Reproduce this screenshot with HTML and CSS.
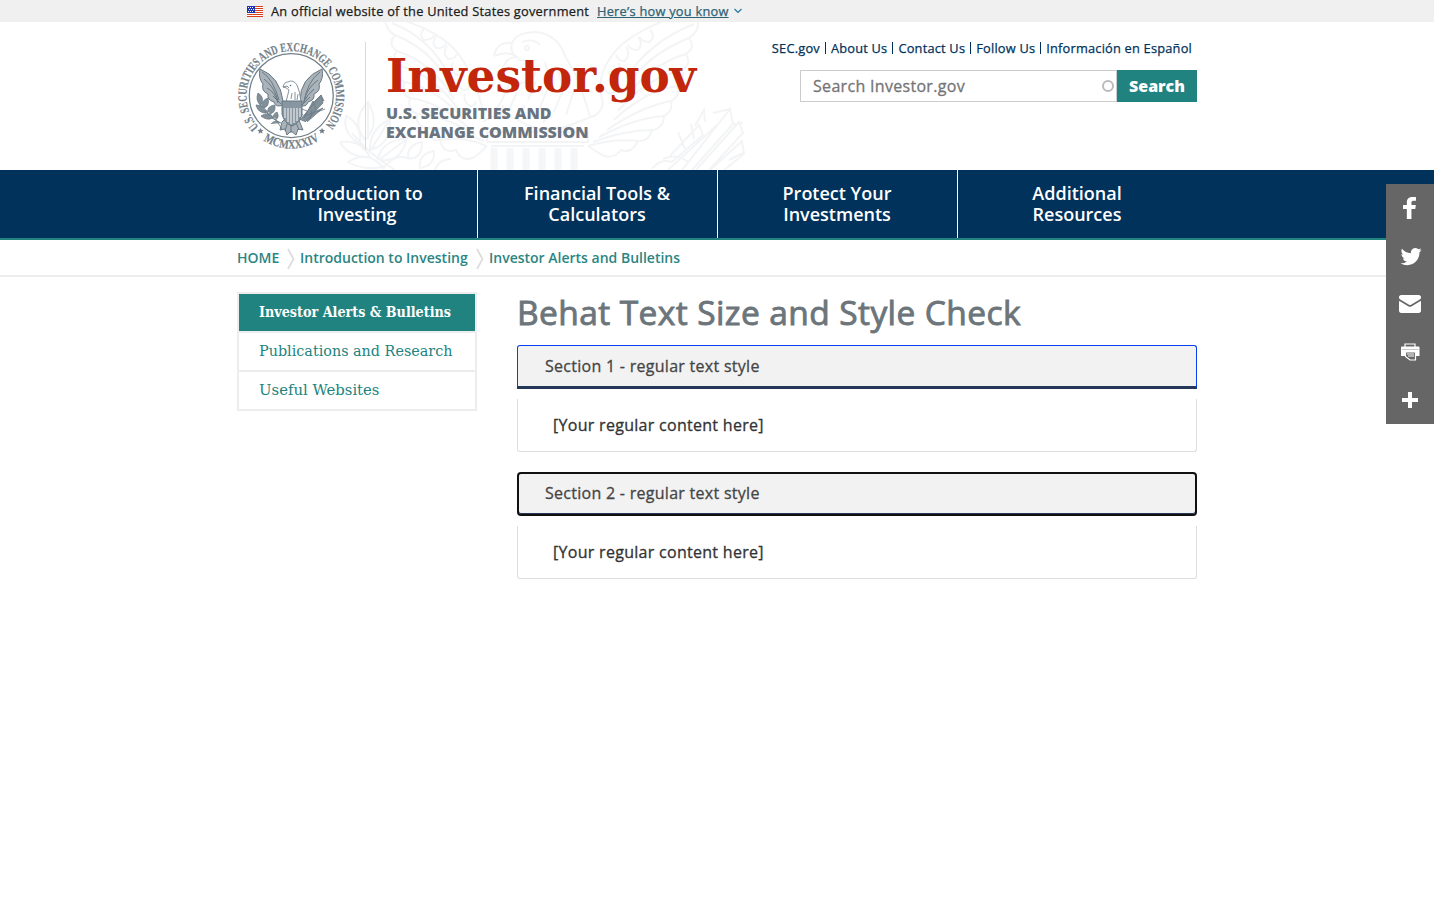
FILE: index.html
```html
<!DOCTYPE html>
<html lang="en">
<head>
<meta charset="utf-8">
<title>Behat Text Size and Style Check | Investor.gov</title>
<link rel="stylesheet" href="styles.css">
</head>
<body>
<div class="banner">
  <div class="banner-inner">
    <svg class="flag" width="16" height="11" viewBox="0 0 16 11"><path fill="#fff" d="M0 0h16v11H0z"/><path stroke="#db3e1f" d="M0 .5h16M0 2.5h16M0 4.5h16M0 6.5h16M0 8.5h16M0 10.5h16"/><path fill="#1e33b1" d="M0 0h8v7H0z"/><path stroke="#fff" stroke-dasharray="1 1" d="M1 1.5h6M2 3.5h5M1 5.5h6"/></svg>
    <span class="banner-text">An official website of the United States government</span>
    <a class="banner-link" href="#">Here’s how you know</a>
    <svg class="chev" width="8" height="6" viewBox="0 0 8 6"><path d="M.5 1 4 4.5 7.500 1" fill="none" stroke="#2378a0" stroke-width="1.2"/></svg>
  </div>
</div>

<header class="header">
  <svg class="watermark" width="420" height="150" viewBox="0 0 420 150" fill="none" stroke="#f3f4f6" stroke-width="2">
    <g>
      <path d="M62 0Q108 14 124 42 136 62 144 94M45 0Q47 12 55 15 47 24 57 31 50 40 60 46 54 58 65 62 60 74 70 78 67 90 77 94 75 106 87 108 87 121 100 120 103 134 116 130 122 143 135 137L147 126"/>
      <path d="M52 3Q90 18 108 54M55 15Q93 30 112 68M57 31Q92 42 114 79M60 46Q94 55 119 90M65 62Q95 68 123 98M70 78Q98 82 128 107M77 94Q106 96 135 115M87 108Q114 108 144 121M100 120Q122 116 147 126"/>
      <path d="M84 9q-6 5 0 11 8 0 10-5M96 16q-5 7 0 12 8 1 10-5M107 26q-5 7 1 13 7 0 9-5M113 42q-3 8 3 13 7 0 8-5M119 58q-3 8 4 12 6 0 7-5M125 74q-2 8 5 12 5 0 6-5"/>
      <path d="M326 0Q282 17 269 40 256 58 263 84 260 96 248 98M357 0Q361 10 349 18 356 27 346 34 352 44 342 50 346 60 337 66 340 77 331 81 333 92 324 96 323 109 312 110 309 122 298 121 292 134 281 130 273 140 262 135L248 126"/>
      <path d="M354 4Q309 22 286 58M349 18Q306 35 284 70M346 34Q309 45 283 81M342 50Q306 58 278 91M337 66Q303 72 274 100M331 81Q300 87 267 110M324 96Q295 98 259 117M312 110Q285 110 253 122M298 121Q275 118 248 126"/>
      <path d="M310 10q6 5 0 12-8 0-10-5M298 17q6 6 0 13-8 0-10-5M286 27q5 7-1 14-7 0-9-6M279 43q3 8-3 14-7 0-8-6M276 61q2 8-4 13-6 0-7-6"/>
      <path d="M154 36Q157 21 172 23 177 12 196 12 218 14 226 38 238 54 250 97M154 36Q168 30 177 37 167 37 164 46M172 23q-3 9 6 15M178 40Q196 40 195 55 188 65 169 64 162 83 155 90M182 22q12-4 18 3"/>
      <circle cx="187" cy="28" r="2"/>
      <path d="M205 42q5 13 2 25M216 47q7 13 6 28M196 61l-8 19M207 70l-8 20M222 72l-8 20M177 72l-8 18M234 70l-8 25M185 85l-8 15M210 91l-7 12M163 85l-4 15"/>
      <path d="M143 102Q160 89 180 101 204 116 233 104L248 98M147 112h101v10H147zM151 126h93"/>
    </g>
    <path d="M154 128v22M170 128v22M186 128v22M202 128v22M218 128v22M234 128v22" stroke="#f5f6f8" stroke-width="7"/>
    <g>
      <path d="M55 150Q30 135 12 113M28 82Q10 101 25 120 41 104 28 82zM6 96q-4 17 14 28 2-20-14-28zM50 99q-21 11-20 31 22-6 20-31zM0 122q9 16 30 15-10-18-30-15zM67 119q-24 0-29 20 22 6 29-20zM8 142q16 9 35 5-15-17-35-5zM70 139q-15-7-27 10M28 82v37M50 99l-18 29M67 119l-27 20"/>
      <path d="M82 122q-15 3-14 16 14 2 14-16zM94 131q-16 3-14 17 15-2 14-17zM111 139q-12 0-16 11"/>
      <path d="M342 150l48-61 3 15-41 46M356 150l43-48 4 11-34 37M370 150l32-29 2 13-20 16M328 150l49-45M330 136l29-31 4 10-31 27M365 102l-1-12-9 16M373 93l17-4M393 104l10-1M345 129l-7-17M354 119l-3-15M389 140l16-8M323 139q14-6 25 3M312 149q8-11 20-7"/>
    </g>
  </svg>
  <div class="header-inner">
    <svg class="seal" width="108" height="110" viewBox="0 0 108 110">
      <defs>
        <path id="ring" d="M22.500 86.500A44.800 44.800 0 1 1 86.100 86.500"/>
        <path id="ring-low" d="M17 92A52.700 52.700 0 0 0 91.600 92"/>
      </defs>
      <circle cx="54.300" cy="54.700" r="42" fill="none" stroke="#738089" stroke-width="1.300"/>
      <text class="seal-text"><textPath href="#ring" startOffset="1" textLength="206" lengthAdjust="spacingAndGlyphs">U.S. SECURITIES AND EXCHANGE COMMISSION</textPath></text>
      <text class="seal-text"><textPath href="#ring-low" startOffset="12" textLength="59" lengthAdjust="spacingAndGlyphs">MCMXXXIV</textPath></text>
      <path d="M23.500 87l.9 1.800 2.100.2-1.500 1.500.5 2.100-2-1-1.800 1.100.3-2.100-1.700-1.400 2.200-.4zM85 87l1 1.800 2.200.4-1.700 1.400.3 2.100-1.800-1.100-2 1 .5-2.100-1.500-1.500 2.100-.2z" fill="#738089"/>
      <g fill="#aab3b9" stroke="#687985" stroke-width="1">
        <path d="M46 60Q43 36 23 28q-2 9 3 15-2 7 5 10-1 6 6 8 2 6 9 3z"/>
        <path d="M63 60Q63 37 85 28q2 9-3 15 2 7-5 10 1 6-6 8-2 6-8 3z"/>
        <path d="M25 31q11 7 17 28M27 38q10 7 14 22M30 47q8 4 11 15M36 55l8 8M83 31Q70 41 67 61M81 39Q70 47 67 60M77 48Q70 54 66 62M73 56l-8 8" fill="none"/>
        <path d="M45 81l-2 8 5-1 2 6 4-4 5 4 2-6 5 1-5-12-7-5z"/>
        <path d="M51 80l-3 10M54 80v12M58 79l4 10" fill="none"/>
      </g>
      <g fill="#82909a" stroke="#687985" stroke-width=".8">
        <path d="M43 82Q30 75 21 61M21 52q-3 8 3 12 4-8-3-12zM31 57q-8 3-5 10 7-1 5-10zM19 64q2 8 10 8-2-8-10-8zM38 64q-9 1-7 9 8 0 7-9zM24 75q6 5 12 2-5-7-12-2zM40 71q-6 3-2 8 5-2 2-8zM34 83q4-5 10-1M41 82l4 6"/>
        <path d="M63 79l21-25 2 8-18 19M68 75l18-8-16 14M67 77l9-17 3 9M76 62l8-8 3 6M61 80l5-7M70 70l-5-2M80 71l8-3M73 78l2-9"/>
      </g>
      <path d="M46 46q1-5 5-5 5-3 9 3 3 6 4 17H49l3-12q-3-3-6-3z" fill="#fff" stroke="#687985" stroke-width=".8"/>
      <path d="M46 46l4-1 2 2M55 52l-1 6M58 51v8M61 53l-1 6" stroke="#687985" stroke-width=".8" fill="none"/><circle cx="53.500" cy="44.500" r=".8" fill="#566873"/>
      <path d="M45 60h20v13q-2 9-10 12-8-3-10-12z" fill="#8796a1" stroke="#657785"/>
      <path d="M48 67v10M51 67v14M54 67v16M57 67v15M60 67v13M63 67v9" stroke="#eef1f3" stroke-width="1.1"/>
    </svg>
    <div class="brand">
      <svg class="wordmark" width="320" height="62" viewBox="0 0 320 62"><text x="0" y="47" textLength="310" lengthAdjust="spacingAndGlyphs">Investor.gov</text></svg>
      <div class="agency">U.S. SECURITIES AND<br>EXCHANGE COMMISSION</div>
    </div>
    <div class="tools">
      <nav class="util"><a>SEC.gov</a><a>About Us</a><a>Contact Us</a><a>Follow Us</a><a>Información en Español</a></nav>
      <form class="search"><div class="field"><span>Search Investor.gov</span><i class="ring"></i></div><div class="button">Search</div></form>
    </div>
  </div>
</header>

<nav class="mainnav"><div class="mainnav-inner">
  <a>Introduction to<br>Investing</a><a>Financial Tools &amp;<br>Calculators</a><a>Protect Your<br>Investments</a><a>Additional<br>Resources</a>
</div></nav>

<div class="crumbs"><div class="crumbs-inner">
  <a class="c1">HOME</a>
  <svg width="8" height="22" viewBox="0 0 8 22"><path d="M1 1l5.500 10L1 21" fill="none" stroke="#ddd" stroke-width="1.800"/></svg>
  <a class="c2">Introduction to Investing</a>
  <svg width="8" height="22" viewBox="0 0 8 22"><path d="M1 1l5.500 10L1 21" fill="none" stroke="#ddd" stroke-width="1.800"/></svg>
  <a class="c3">Investor Alerts and Bulletins</a>
</div></div>

<div class="page">
  <aside class="side">
    <a class="side-item active"><svg width="200" height="24"><text x="0" y="16" textLength="192" lengthAdjust="spacingAndGlyphs">Investor Alerts &amp; Bulletins</text></svg></a>
    <a class="side-item"><svg width="200" height="24"><text x="0" y="16" textLength="193.500" lengthAdjust="spacingAndGlyphs">Publications and Research</text></svg></a>
    <a class="side-item"><svg width="200" height="24"><text x="0" y="16" textLength="120.500" lengthAdjust="spacingAndGlyphs">Useful Websites</text></svg></a>
  </aside>
  <main class="main">
    <h1>Behat Text Size and Style Check</h1>
    <div class="acc-head hover">Section 1 - regular text style</div>
    <div class="acc-body">[Your regular content here]</div>
    <div class="acc-head focus">Section 2 - regular text style</div>
    <div class="acc-body">[Your regular content here]</div>
  </main>
</div>

<div class="share">
  <a><svg viewBox="0 0 32 32"><path fill="#fff" d="M22 5.160c-.406-.054-1.806-.16-3.430-.16-3.400 0-5.733 1.825-5.733 5.170v2.882H9v3.913h3.837V27h4.604V16.965h3.823l.587-3.913h-4.410v-2.500c0-1.123.347-1.903 2.198-1.903H22V5.160z"/></svg></a>
  <a><svg viewBox="0 0 32 32"><path fill="#fff" transform="translate(3 2.500) scale(.88)" d="M28 8.557a9.913 9.913 0 0 1-2.828.775 4.930 4.930 0 0 0 2.166-2.725 9.738 9.738 0 0 1-3.130 1.194 4.920 4.920 0 0 0-3.593-1.550 4.924 4.924 0 0 0-4.794 6.049c-4.090-.210-7.720-2.170-10.150-5.150a4.942 4.942 0 0 0-.665 2.477c0 1.710.870 3.214 2.190 4.100a4.968 4.968 0 0 1-2.230-.616v.060c0 2.390 1.700 4.380 3.952 4.830-.414.115-.850.174-1.297.174-.318 0-.626-.030-.928-.086a4.935 4.935 0 0 0 4.600 3.420 9.893 9.893 0 0 1-6.114 2.107c-.398 0-.790-.023-1.175-.068a13.953 13.953 0 0 0 7.550 2.213c9.056 0 14.010-7.507 14.010-14.013 0-.213-.005-.426-.015-.637.960-.695 1.795-1.560 2.455-2.550z"/></svg></a>
  <a><svg viewBox="0 0 32 32"><g fill="#fff"><path d="M27 22.757c0 1.240-.988 2.243-2.190 2.243H7.190C5.980 25 5 23.994 5 22.757V13.670c0-.556.390-.773.855-.496l8.780 5.238c.782.467 1.950.467 2.730 0l8.780-5.238c.472-.280.855-.063.855.495v9.087z"/><path d="M27 9.243C27 8.006 26.020 7 24.810 7H7.190C5.988 7 5 8.004 5 9.243v.465c0 .554.385 1.232.857 1.514l9.610 5.733c.267.160.800.160 1.067 0l9.610-5.733c.473-.283.856-.960.856-1.514v-.465z"/></g></svg></a>
  <a><svg viewBox="0 0 32 32"><path d="M11 11V8h10v3" fill="none" stroke="#fff" stroke-width="1.200"/><path d="M7 11.500q0-1 1-1h16.500q1 0 1 1V20H22v-4H11v4H7z" fill="#fff"/><path d="M11.500 16v4.500l4.500 3.500h5.500v-8z" fill="none" stroke="#fff" stroke-width="1.200"/><path d="M8 13.500h16.500" stroke="#bbb" stroke-width=".8"/><path d="M13 18h7M14 20h6" stroke="#fff"/></svg></a>
  <a><svg viewBox="0 0 32 32"><path fill="#fff" d="M14 8h4v6h6v4h-6v6h-4v-6H8v-4h6z"/></svg></a>
</div>
</body>
</html>
```
FILE: styles.css
```css
* { box-sizing: border-box; }
body { margin: 0; background: #fff; font-family: "Open Sans", sans-serif; color: #212529; }
.banner { height: 22px; background: #f0f0f0; }
.banner-inner { width: 960px; height: 22px; margin: 0 auto; padding-left: 10px; display: flex; align-items: center; font-size: 12.8px; line-height: 22px; white-space: nowrap; letter-spacing: .25px; -webkit-text-stroke: .25px; }
.flag { margin-right: 8px; }
.banner-text { width: 318px; color: #1b1b1b; }
.banner-link { margin-left: 8px; width: 132px; color: #2e6276; text-decoration: underline; }
.chev { margin-left: 5px; }

.header { position: relative; height: 148px; overflow: hidden; }
.watermark { position: absolute; left: calc(50% - 377px); top: -2px; }
.header-inner { position: relative; width: 960px; margin: 0 auto; display: flex; align-items: flex-start; }
.seal { margin-top: 19px; display: block; }
.seal-text { font-family: "Liberation Serif", serif; font-weight: 700; font-size: 12.5px; fill: #738089; stroke: #738089; stroke-width: .2px; }
.brand { margin: 20px 0 0 20px; height: 108px; border-left: 1px solid #d8dadd; padding-left: 20px; width: 345px; }
.wordmark { display: block; margin-top: 3px; }
.wordmark text { font-family: "DejaVu Serif", serif; font-weight: 700; font-size: 46px; fill: #c2260b; }
.agency { margin-top: -3px; font-size: 16px; line-height: 19px; font-weight: 800; color: #6a747e; white-space: nowrap; }
.tools { margin-left: auto; width: 460px; display: flex; flex-direction: column; align-items: flex-end; }
.util { margin-top: 20px; padding-right: 5px; height: 12px; display: flex; font-size: 12.8px; line-height: 12px; color: #00325b; white-space: nowrap; letter-spacing: .21px; -webkit-text-stroke: .25px; }
.util a + a { border-left: 1px solid #00325b; margin-left: 5px; padding-left: 5px; }
.search { margin-top: 16px; display: flex; width: 397px; height: 32px; }
.field { width: 317px; border: 1px solid #ccc; display: flex; align-items: center; justify-content: space-between; padding: 0 2px 0 12px; font-size: 16px; color: #757575; letter-spacing: .31px; -webkit-text-stroke: .3px; }
.ring { width: 12px; height: 12px; border: 2px solid #bbb; border-radius: 50%; }
.button { width: 80px; background: #218380; color: #fff; font-size: 16px; font-weight: 800; line-height: 32px; text-align: center; }

.mainnav { height: 70px; background: #00325b; border-bottom: 2px solid #218380; }
.mainnav-inner { width: 960px; margin: 0 auto; padding-left: 1px; display: grid; grid-template-columns: repeat(4, 240px); }
.mainnav a { height: 68px; padding: 13px 1px 0 0; text-align: center; color: #fff; font-size: 18px; line-height: 21px; font-weight: 600; border-right: 1px solid #fff; }
.mainnav a:last-child { border-right: 0; padding-right: 2px; }

.crumbs { height: 37px; border-bottom: 2px solid #ededed; }
.crumbs-inner { width: 960px; height: 35px; margin: 0 auto; display: flex; align-items: center; font-size: 14px; font-weight: 600; color: #2b8583; white-space: nowrap; }
.crumbs svg { margin: 2px 5px 0 8px; }
.c1 { width: 42px; }
.c2 { width: 168px; }

.page { width: 960px; margin: 15px auto 0; display: flex; align-items: flex-start; gap: 40px; }
.side { width: 240px; border: 2px solid #ededed; }
.side-item { display: block; height: 39px; padding: 7px 0 0 20px; border-bottom: 2px solid #ededed; }
.side-item:last-child { height: 37px; border-bottom: 0; }
.side-item svg { display: block; }
.side-item text { font-family: "DejaVu Serif", serif; font-size: 14px; fill: #218380; }
.side-item.active { background: #218380; background-clip: padding-box; }
.side-item.active text { fill: #fff; font-weight: 700; }
.main { width: 680px; }
h1 { margin: 0; height: 53px; font-size: 33.5px; line-height: 40px; font-weight: 400; letter-spacing: .41px; -webkit-text-stroke: .9px; color: #6c757b; white-space: nowrap; }
.acc-head { height: 44px; padding-left: 27px; background: #f2f2f2; border: 1px solid #0a3ff0; border-bottom: 3px solid #263858; border-radius: 3px 3px 0 0; font-size: 16px; line-height: 41px; color: #454545; letter-spacing: .28px; -webkit-text-stroke: .3px; }
.acc-head.focus { border: 2px solid #111; padding-left: 26px; border-radius: 4px; line-height: 39px; box-shadow: inset 0 -1px #263858; }
.acc-body { height: 53px; margin: 10px 0 20px; padding-left: 35px; border: 1px solid #ddd; border-top: 0; border-radius: 0 0 3px 3px; font-size: 16px; line-height: 52px; color: #333; letter-spacing: .29px; -webkit-text-stroke: .3px; }

.share { position: fixed; right: 0; top: 184px; width: 48px; height: 240px; background: #666; display: flex; flex-direction: column; }
.share a { height: 48px; padding: 8px; }
.share svg { display: block; width: 32px; height: 32px; }
```
